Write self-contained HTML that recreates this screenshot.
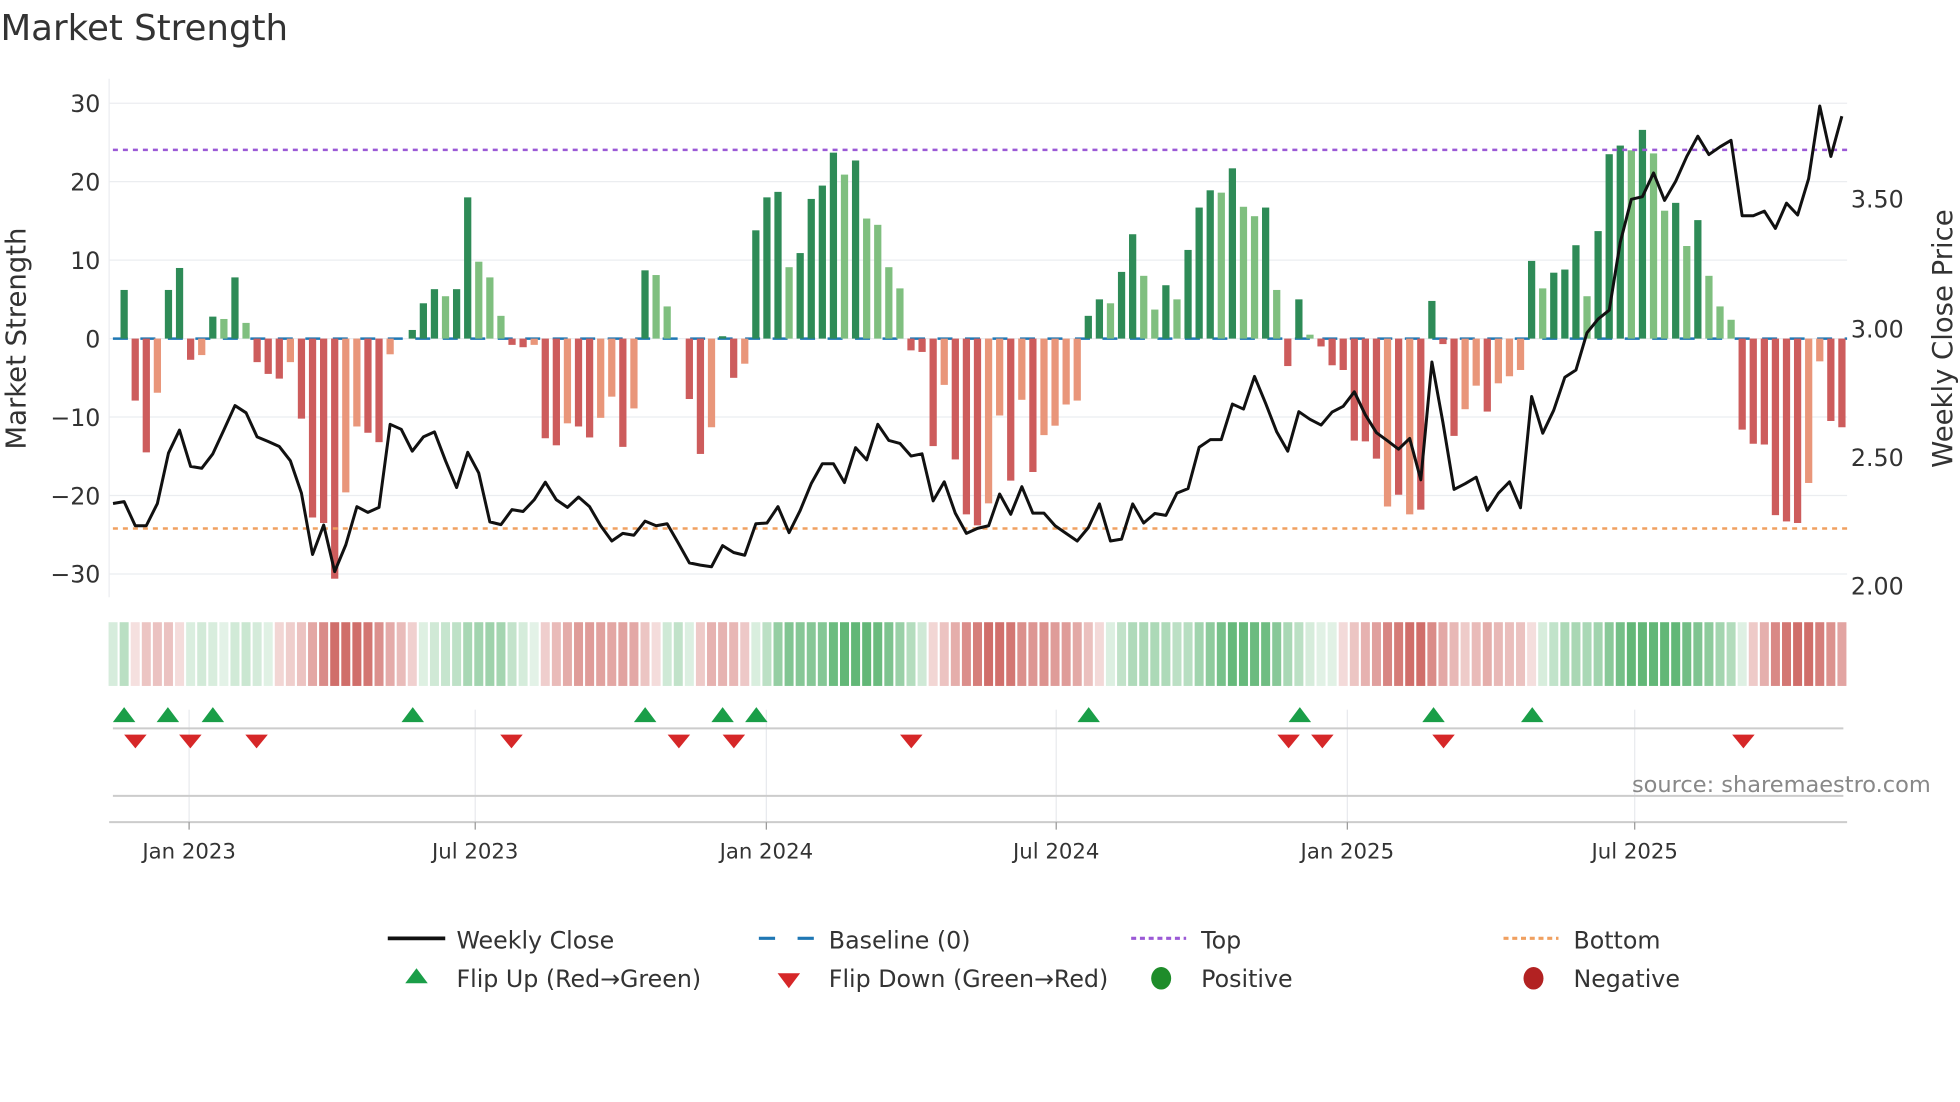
<!DOCTYPE html>
<html><head><meta charset="utf-8"><style>
html,body{margin:0;padding:0;background:#fff;}
svg{display:block;}
text{font-family:"DejaVu Sans","Liberation Sans",sans-serif;fill:#333;}
</style></head><body>
<svg id="s" width="1960" height="1102" viewBox="0 0 1568 882" xmlns="http://www.w3.org/2000/svg">
<text x="0" y="32" font-size="28.5">Market Strength</text>
<g id="g"></g>
</svg>
<script>
var V=[6.2,-7.9,-14.5,-6.9,6.2,9,-2.7,-2.1,2.8,2.5,7.8,2,-3,-4.5,-5.1,-3,-10.2,-22.8,-23.5,-30.6,-19.6,-11.2,-12,-13.2,-2,0,1.1,4.5,6.3,5.4,6.3,18,9.8,7.8,2.9,-0.8,-1.1,-0.8,-12.7,-13.6,
-10.8,-11.2,-12.6,-10.1,-7.4,-13.8,-8.9,8.7,8.1,4.1,0,-7.7,-14.7,-11.3,0.3,-5,-3.2,13.8,18,18.7,9.1,10.9,17.8,19.5,23.7,20.9,22.7,15.3,14.5,9.1,6.4,-1.5,-1.7,-13.7,-5.9,-15.4,-22.4,-23.8,-21,-9.8,
-18.1,-7.8,-17,-12.3,-11.1,-8.4,-7.9,2.9,5,4.5,8.5,13.3,8,3.7,6.8,5,11.3,16.7,18.9,18.6,21.7,16.8,15.6,16.7,6.2,-3.5,5,0.5,-1,-3.4,-4,-13,-13.1,-15.3,-21.4,-19.9,-22.4,-21.8,4.8,-0.7,-12.4,
-9,-6,-9.3,-5.7,-4.8,-4,9.9,6.4,8.4,8.8,11.9,5.4,13.7,23.5,24.6,24,26.6,23.6,16.3,17.3,11.8,15.1,8,4.1,2.4,-11.6,-13.4,-13.5,-22.5,-23.3,-23.5,-18.4,-2.9,-10.5,-11.3];
var L1=[1082,1077,1140,1140,1082,950,890,985,990,952,890,826,845,908,920,933,970,1055,1215,1138,1260,1190,1090,1105,1092,875,888,945,908,895,970,1040,948,1002,1130,1137,1098,1103,1072,1026,1072];
var L2=[1092,1065,1090,1140,1180,1160,1165,1128,1140,1135,1185,1237,1243,1247,1192,1210,1217,1135,1133,1090,1158,1100,1030,978,978,1027,936,968,875,917,925,958,952,1075,1025,1107,1160,1147,1140,1057,1110];
var L3=[1038,1107,1107,1140,1160,1180,1145,1083,1180,1175,1083,1133,1108,1113,1055,1043,935,915,915,822,835,750,820,895,945,842,862,877,843,828,790,850,897,918,940,912,1020,712,870,1045];
var L4=[1030,1013,1100,1055,1025,1093,802,898,838,752,733,636,600,577,400,287,280,218,290,240,175,122,170,150,133,330,330,318,363,297,328,233,43,175,70];
var LY=L1.concat(L2,L3,L4);
var DG="#2e8b57",LG="#7fbf7f",RD="#cd5c5c",OR="#e9967a";
var lightIdx={3:1,7:1,9:1,11:1,15:1,20:1,21:1,24:1,29:1,32:1,33:1,34:1,37:1,40:1,43:1,44:1,46:1,48:1,49:1,53:1,56:1,60:1,65:1,67:1,68:1,69:1,70:1,74:1,78:1,79:1,81:1,83:1,84:1,85:1,86:1,89:1,92:1,93:1,95:1,99:1,101:1,102:1,104:1,107:1,114:1,116:1,121:1,122:1,124:1,125:1,126:1,128:1,132:1,136:1,138:1,139:1,141:1,143:1,144:1,145:1,152:1,153:1};
function bx(i){return 99+8.87*i;}
function vy(v){return 271-6.28*v;}
var h="";
for(var k=-30;k<=30;k+=10){h+='<line x1="87" x2="1478" y1="'+vy(k)+'" y2="'+vy(k)+'" stroke="#ebedf0" stroke-width="1"/>';}
h+='<line x1="87" x2="87" y1="63" y2="478" stroke="#ebedf0"/>';
var ticks=[[151,"Jan 2023"],[380,"Jul 2023"],[613,"Jan 2024"],[845,"Jul 2024"],[1078,"Jan 2025"],[1308,"Jul 2025"]];
ticks.forEach(function(t){h+='<line x1="'+t[0]+'" x2="'+t[0]+'" y1="568" y2="658" stroke="#e8eaee"/>';});
[30,20,10,0,-10,-20,-30].forEach(function(k){h+='<text x="80" y="'+(vy(k)+7)+'" font-size="19" text-anchor="end">'+(k<0?'\u2212'+(-k):k)+'</text>';});
[["3.50",159],["3.00",263],["2.50",366],["2.00",469]].forEach(function(r){h+='<text x="1481" y="'+(r[1]+7)+'" font-size="19">'+r[0]+'</text>';});
h+='<text transform="translate(20,271) rotate(-90)" font-size="22" text-anchor="middle">Market Strength</text>';
h+='<text transform="translate(1562,271) rotate(-90)" font-size="22" text-anchor="middle">Weekly Close Price</text>';
h+='<line x1="90" x2="1478" y1="271" y2="271" stroke="#1f77b4" stroke-width="2" stroke-dasharray="12,10"/>';
for(var i=0;i<V.length;i++){var v=V[i];if(Math.abs(v)<0.05)continue;var c=v>0?(lightIdx[i]?LG:DG):(lightIdx[i]?OR:RD);
var y=v>0?vy(v):271;var hh=Math.abs(v)*6.28;h+='<rect x="'+(bx(i)-2.9)+'" y="'+y+'" width="5.8" height="'+hh+'" fill="'+c+'"/>';}
h+='<line x1="90" x2="1478" y1="120" y2="120" stroke="#9b59d6" stroke-width="2" stroke-dasharray="4,4"/>';
h+='<line x1="90" x2="1478" y1="423" y2="423" stroke="#f0a060" stroke-width="2" stroke-dasharray="4,4"/>';
var pts=[];for(var j=0;j<LY.length;j++){pts.push(bx(j-1).toFixed(1)+","+(271+(LY[j]-651)*0.3063).toFixed(1));}
h+='<polyline points="'+pts.join(" ")+'" fill="none" stroke="#111" stroke-width="2.4" stroke-linejoin="round"/>';
for(var i=-1;i<V.length;i++){var a=[];for(var q=i-3;q<=i;q++){if(q>=0)a.push(V[q]);}var m=a.length?a.reduce(function(p,c){return p+c;},0)/a.length:2;
var al=Math.min(0.85,0.15+Math.abs(m)/28);var col=m>=0?'rgba(70,170,95,'+al+')':'rgba(200,85,80,'+al+')';
h+='<rect x="'+(bx(i)-3.6)+'" y="498" width="7.2" height="51" fill="'+col+'"/>';}
h+='<line x1="90" x2="1475" y1="583" y2="583" stroke="#ccc" stroke-width="1.6"/>';
h+='<line x1="90" x2="1475" y1="637" y2="637" stroke="#ccc" stroke-width="1.6"/>';
h+='<line x1="87" x2="1478" y1="658" y2="658" stroke="#ccc" stroke-width="1.6"/>';
[99,134,170,330,516,578,605,871,1040,1147,1226].forEach(function(x){h+='<polygon points="'+(x-9)+',578 '+(x+9)+',578 '+x+',566" fill="#1a9e48"/>';});
[108,152,205,409,543,587,729,1031,1058,1155,1395].forEach(function(x){h+='<polygon points="'+(x-9)+',588 '+(x+9)+',588 '+x+',599" fill="#d62728"/>';});
ticks.forEach(function(t){h+='<line x1="'+t[0]+'" x2="'+t[0]+'" y1="658" y2="664" stroke="#999"/><text x="'+t[0]+'" y="687" font-size="17" text-anchor="middle">'+t[1]+'</text>';});
h+='<text x="1545" y="634" font-size="18" text-anchor="end" style="fill:#888">source: sharemaestro.com</text>';
h+='<line x1="310" x2="356" y1="751" y2="751" stroke="#111" stroke-width="3"/><text x="365" y="759" font-size="19">Weekly Close</text>';
h+='<line x1="607" x2="651" y1="751" y2="751" stroke="#1f77b4" stroke-width="2.5" stroke-dasharray="13,18"/><text x="663" y="759" font-size="19">Baseline (0)</text>';
h+='<line x1="905" x2="949" y1="751" y2="751" stroke="#9b59d6" stroke-width="2.5" stroke-dasharray="4,3"/><text x="961" y="759" font-size="19">Top</text>';
h+='<line x1="1203" x2="1247" y1="751" y2="751" stroke="#f0a060" stroke-width="2.5" stroke-dasharray="4,3"/><text x="1259" y="759" font-size="19">Bottom</text>';
h+='<polygon points="324,787 342,787 333,775" fill="#1a9e48"/><text x="365" y="790" font-size="19">Flip Up (Red\u2192Green)</text>';
h+='<polygon points="622,779 640,779 631,791" fill="#d62728"/><text x="663" y="790" font-size="19">Flip Down (Green\u2192Red)</text>';
h+='<ellipse cx="929" cy="783" rx="8" ry="9" fill="#1e8c2a"/><text x="961" y="790" font-size="19">Positive</text>';
h+='<ellipse cx="1227" cy="783" rx="8" ry="9" fill="#b22222"/><text x="1259" y="790" font-size="19">Negative</text>';
document.getElementById("g").innerHTML=h;
</script>
</body></html>
